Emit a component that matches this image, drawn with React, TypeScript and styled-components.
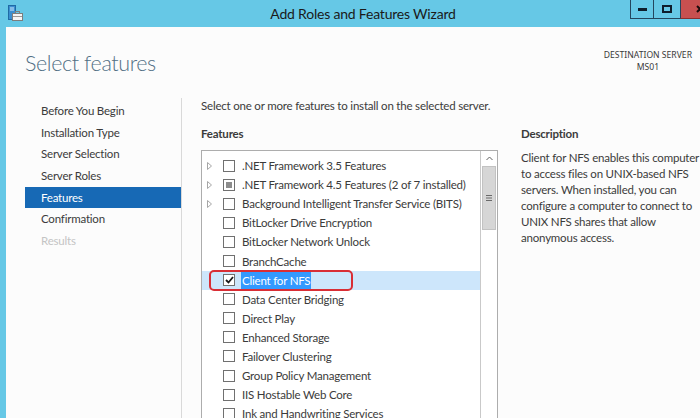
import React from "react";
import styled, { createGlobalStyle, css } from "styled-components";

const GlobalStyle = createGlobalStyle`
  html, body { margin: 0; padding: 0; overflow: hidden; }
  body { font-family: Lato, "Noto Sans", sans-serif; }
`;

const bodyText = css`
  font-size: 11.5px;
  letter-spacing: -0.2px;
  color: #3b3b3b;
`;

const Window = styled.div`
  width: 700px;
  height: 418px;
  background: #66c8e6;
  display: flex;
  flex-direction: column;
  overflow: hidden;
`;

const TitleBar = styled.div`
  height: 27px;
  flex: none;
  display: grid;
  grid-template-columns: 1fr auto 1fr;
  align-items: start;
`;

const AppIcon = styled.div`
  padding: 5px 0 0 8px;
  height: 16px;
`;

const Title = styled.div`
  font-size: 14px;
  letter-spacing: -0.2px;
  line-height: 27px;
  color: #1a1a1a;
  padding-left: 26px;
`;

const Controls = styled.div`
  justify-self: end;
  display: flex;
  height: 19px;
  margin-right: -6px;
`;

const CtrlButton = styled.div<{ $kind: "min" | "max" | "close" }>`
  width: ${(p) => (p.$kind === "max" ? "27px" : p.$kind === "close" ? "26px" : "23px")};
  height: 19px;
  box-sizing: border-box;
  background: ${(p) => (p.$kind === "close" ? "#c75050" : "#66c8e6")};
  border-left: 1px solid #24465e;
  border-bottom: 1px solid ${(p) => (p.$kind === "close" ? "#8a2f2f" : "#24465e")};
  display: flex;
  align-items: center;
  justify-content: ${(p) => (p.$kind === "close" ? "flex-end" : "center")};
`;

const Body = styled.div`
  flex: 1;
  margin-left: 6px;
  background: #fcfcfc;
  display: flex;
  flex-direction: column;
  min-height: 0;
`;

const Header = styled.div`
  display: flex;
  justify-content: space-between;
  align-items: flex-start;
  padding: 21px 8px 0 19px;
  height: 50px;
  flex: none;
`;

const Heading = styled.h1`
  margin: 0;
  font-family: Lato, sans-serif;
  font-weight: 300;
  font-size: 21.5px;
  letter-spacing: -0.4px;
  line-height: 30px;
  color: #516f84;
`;

const Destination = styled.div`
  margin-top: 1px;
  font-family: "Noto Sans", sans-serif;
  font-size: 8.6px;
  line-height: 12px;
  color: #3a3a3a;
  text-align: center;
`;

const Main = styled.div`
  flex: 1;
  display: flex;
  min-height: 0;
  padding-left: 19px;
`;

const Nav = styled.nav`
  width: 156px;
  flex: none;
  padding-top: 2px;
  border-right: 1px solid #d9d9d9;
`;

const NavItem = styled.div<{ $active?: boolean; $disabled?: boolean }>`
  ${bodyText};
  height: 21.7px;
  line-height: 21.7px;
  padding-left: 16px;
  color: ${(p) => (p.$active ? "#ffffff" : p.$disabled ? "#c4c4c4" : "#3b3b3b")};
  background: ${(p) => (p.$active ? "#1769b5" : "transparent")};
`;

const Content = styled.div`
  flex: 1;
  display: flex;
  flex-direction: column;
  padding: 0 0 0 19px;
  min-width: 0;
`;

const Intro = styled.div`
  ${bodyText};
  line-height: 16px;
  height: 28px;
  white-space: nowrap;
`;

const Columns = styled.div`
  display: flex;
  gap: 23px;
  flex: 1;
  min-height: 0;
`;

const ListColumn = styled.div`
  width: 297px;
  flex: none;
  display: flex;
  flex-direction: column;
`;

const SectionTitle = styled.div`
  ${bodyText};
  font-weight: 700;
  line-height: 16px;
  height: 24px;
`;

const ListBox = styled.div`
  flex: 1;
  border: 1px solid #adadad;
  border-bottom: none;
  background: #ffffff;
  display: flex;
  min-height: 0;
  overflow: hidden;
`;

const Rows = styled.div`
  flex: 1;
  padding-top: 5px;
`;

const Row = styled.div<{ $selected?: boolean }>`
  height: 19.1px;
  display: flex;
  align-items: center;
  background: ${(p) => (p.$selected ? "#cde6fb" : "transparent")};
  position: relative;
`;

const Expander = styled.div`
  width: 21px;
  flex: none;
  display: flex;
  justify-content: flex-start;
  padding-left: 5px;
  box-sizing: border-box;
`;

const Check = styled.div`
  width: 12px;
  height: 12px;
  box-sizing: border-box;
  border: 1px solid #707070;
  background: #fff;
  flex: none;
  display: flex;
  align-items: center;
  justify-content: center;
  margin-right: 7px;
`;

const MixedMark = styled.div`
  width: 6px;
  height: 6px;
  background: #8c8c8c;
`;

const Label = styled.span<{ $highlight?: boolean }>`
  ${bodyText};
  line-height: 17px;
  color: ${(p) => (p.$highlight ? "#ffffff" : "#3b3b3b")};
  background: ${(p) => (p.$highlight ? "#3399ff" : "transparent")};
  white-space: nowrap;
  padding: 0 ${(p) => (p.$highlight ? "1px" : "0")};
  margin-left: ${(p) => (p.$highlight ? "-1px" : "0")};
`;

const Annotation = styled.div`
  position: absolute;
  left: 7px;
  top: -1px;
  width: 144px;
  height: 21px;
  box-sizing: border-box;
  border: 2px solid #d92e35;
  border-radius: 5px;
  pointer-events: none;
`;

const Scrollbar = styled.div`
  width: 16px;
  flex: none;
  border-left: 1px solid #c9c9c9;
  display: flex;
  flex-direction: column;
  background: #fff;
`;

const ScrollArrow = styled.div`
  height: 15px;
  display: flex;
  align-items: center;
  justify-content: center;
`;

const Thumb = styled.div`
  height: 64px;
  margin: 0 1px;
  background: #d6d6d6;
  border: 1px solid #c2c2c2;
  box-sizing: border-box;
  display: flex;
  align-items: center;
  justify-content: center;
`;

const DescColumn = styled.div`
  width: 182px;
  flex: none;
`;

const DescText = styled.p`
  ${bodyText};
  margin: 0;
  line-height: 16px;
  hyphens: manual;
`;

type Feature = { name: string; expand?: boolean; state?: "off" | "on" | "mixed"; selected?: boolean };

const features: Feature[] = [
  { name: ".NET Framework 3.5 Features", expand: true },
  { name: ".NET Framework 4.5 Features (2 of 7 installed)", expand: true, state: "mixed" },
  { name: "Background Intelligent Transfer Service (BITS)", expand: true },
  { name: "BitLocker Drive Encryption" },
  { name: "BitLocker Network Unlock" },
  { name: "BranchCache" },
  { name: "Client for NFS", state: "on", selected: true },
  { name: "Data Center Bridging" },
  { name: "Direct Play" },
  { name: "Enhanced Storage" },
  { name: "Failover Clustering" },
  { name: "Group Policy Management" },
  { name: "IIS Hostable Web Core" },
  { name: "Ink and Handwriting Services" },
];

const navItems = [
  "Before You Begin",
  "Installation Type",
  "Server Selection",
  "Server Roles",
  "Features",
  "Confirmation",
  "Results",
];

const ServerIcon = () => (
  <svg width="15" height="16" viewBox="0 0 15 16">
    <rect x="0.5" y="0.5" width="7" height="14" fill="#3a8fd0" stroke="#1f6aa5" />
    <rect x="2" y="2.5" width="4" height="1" fill="#cfe9fb" />
    <rect x="2" y="4.5" width="4" height="1" fill="#cfe9fb" />
    <rect x="4.5" y="8.5" width="10" height="7" fill="#f4f4f4" stroke="#7d7d7d" />
    <rect x="7.5" y="6.5" width="4" height="2" fill="none" stroke="#7d7d7d" />
    <rect x="5" y="11" width="9" height="1" fill="#9a9a9a" />
  </svg>
);

export default function App() {
  return (
    <>
      <GlobalStyle />
      <Window>
        <TitleBar>
          <AppIcon>
            <ServerIcon />
          </AppIcon>
          <Title>Add Roles and Features Wizard</Title>
          <Controls>
            <CtrlButton $kind="min">
              <svg width="9" height="3"><rect width="9" height="3" fill="#0e1e2c" /></svg>
            </CtrlButton>
            <CtrlButton $kind="max">
              <svg width="10" height="8"><rect x="1" y="1" width="8" height="6" fill="none" stroke="#0e1e2c" strokeWidth="2" /></svg>
            </CtrlButton>
            <CtrlButton $kind="close">
              <svg width="10" height="19">
                <path d="M1 6 L7 12 M7 6 L1 12" stroke="#1a0c0c" strokeWidth="2" />
              </svg>
            </CtrlButton>
          </Controls>
        </TitleBar>
        <Body>
          <Header>
            <Heading>Select features</Heading>
            <Destination>
              DESTINATION SERVER
              <br />
              MS01
            </Destination>
          </Header>
          <Main>
            <Nav>
              {navItems.map((n) => (
                <NavItem key={n} $active={n === "Features"} $disabled={n === "Results"}>
                  {n}
                </NavItem>
              ))}
            </Nav>
            <Content>
              <Intro>Select one or more features to install on the selected server.</Intro>
              <Columns>
                <ListColumn>
                  <SectionTitle>Features</SectionTitle>
                  <ListBox>
                    <Rows>
                      {features.map((f) => (
                        <Row key={f.name} $selected={f.selected}>
                          <Expander>
                            {f.expand && (
                              <svg width="5" height="8" viewBox="0 0 5 8">
                                <path d="M0.5 0.5 L4.5 4 L0.5 7.5 Z" fill="none" stroke="#a6a6a6" />
                              </svg>
                            )}
                          </Expander>
                          <Check>
                            {f.state === "mixed" && <MixedMark />}
                            {f.state === "on" && (
                              <svg width="9" height="8" viewBox="0 0 9 8">
                                <path d="M1 4 L3.5 6.5 L8 1" fill="none" stroke="#1a1a1a" strokeWidth="1.8" />
                              </svg>
                            )}
                          </Check>
                          <Label $highlight={f.selected}>{f.name}</Label>
                          {f.selected && <Annotation />}
                        </Row>
                      ))}
                    </Rows>
                    <Scrollbar>
                      <ScrollArrow>
                        <svg width="7" height="5" viewBox="0 0 7 5">
                          <path d="M0.5 4 L3.5 1 L6.5 4" fill="none" stroke="#606060" />
                        </svg>
                      </ScrollArrow>
                      <Thumb>
                        <svg width="6" height="6" viewBox="0 0 6 6">
                          <rect y="0" width="6" height="1" fill="#6a6a6a" />
                          <rect y="2.5" width="6" height="1" fill="#6a6a6a" />
                          <rect y="5" width="6" height="1" fill="#6a6a6a" />
                        </svg>
                      </Thumb>
                    </Scrollbar>
                  </ListBox>
                </ListColumn>
                <DescColumn>
                  <SectionTitle>Description</SectionTitle>
                  <DescText>
                    Client for NFS enables this computer to access files on UNIX&#8209;based NFS servers. When installed, you can configure a computer to connect to UNIX NFS shares that allow anonymous access.
                  </DescText>
                </DescColumn>
              </Columns>
            </Content>
          </Main>
        </Body>
      </Window>
    </>
  );
}
